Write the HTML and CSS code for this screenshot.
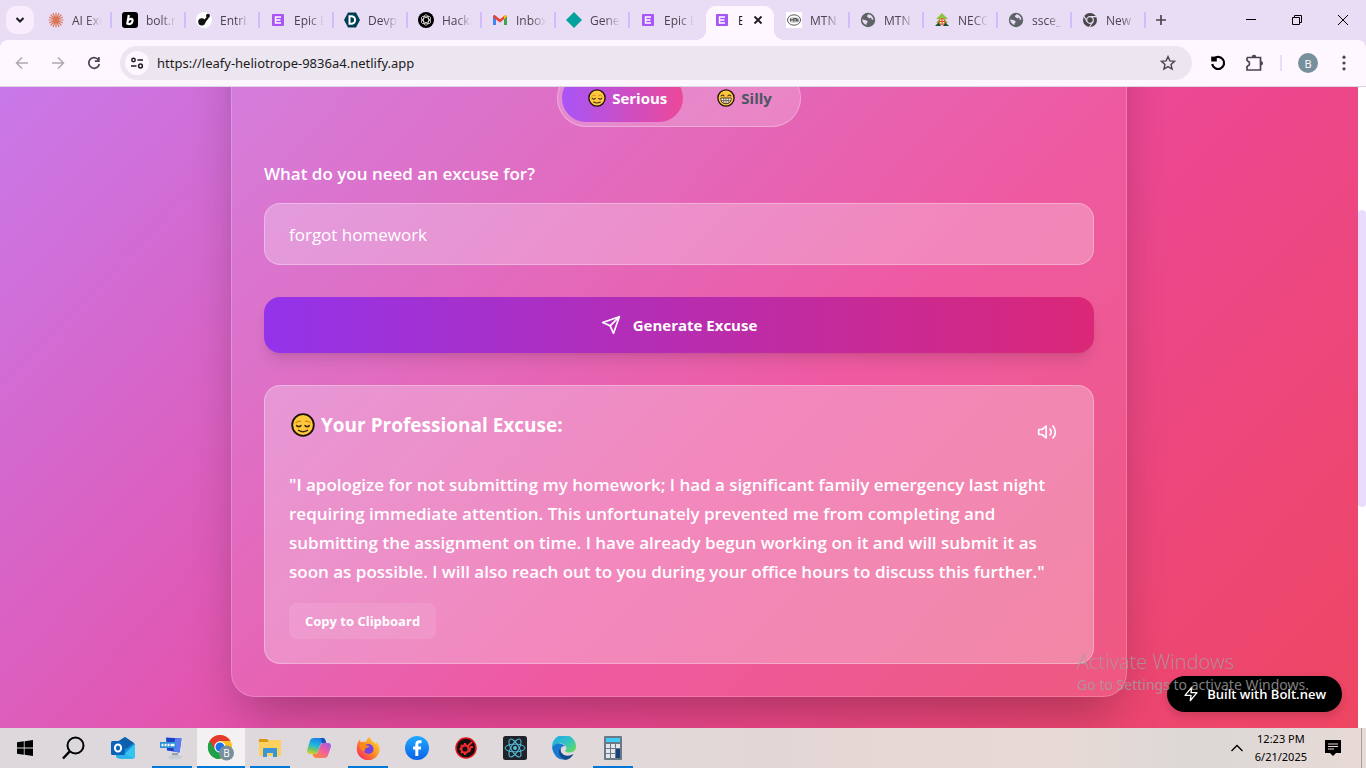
FILE: index.html
```html
<!DOCTYPE html>
<html lang="en">
<head>
    <meta charset="UTF-8">
    <meta name="viewport" content="width=device-width, initial-scale=1.0">
    <title>Epic Excuse Generator</title>
    <link rel="stylesheet" href="styles.css">
</head>
<body>

<!-- shared icons -->
<svg width="0" height="0" class="defs" aria-hidden="true">
    <defs>
        <linearGradient id="edge-a" x1="0" y1="0" x2="1" y2="1">
            <stop offset="0" stop-color="#22a4e8"/><stop offset=".5" stop-color="#2fc2c6"/><stop offset="1" stop-color="#6be04c"/>
        </linearGradient>
        <linearGradient id="fire" x1="1" y1="0" x2="0" y2="1">
            <stop offset="0" stop-color="#ffe53b"/><stop offset=".45" stop-color="#ff9422"/><stop offset="1" stop-color="#f5156c"/>
        </linearGradient>
        <linearGradient id="cop-a" x1=".3" y1="0" x2="0" y2="1">
            <stop offset="0" stop-color="#1a86e8"/><stop offset=".4" stop-color="#22b8d8"/><stop offset=".7" stop-color="#7cc85c"/><stop offset="1" stop-color="#ffd02a"/>
        </linearGradient>
        <linearGradient id="cop-b" x1="1" y1="0" x2=".2" y2="1">
            <stop offset="0" stop-color="#9a5cf0"/><stop offset=".5" stop-color="#ee5f9e"/><stop offset="1" stop-color="#ff8a3a"/>
        </linearGradient>
        <linearGradient id="fb" x1="0" y1="0" x2="0" y2="1">
            <stop offset="0" stop-color="#1faaff"/><stop offset="1" stop-color="#0a62e6"/>
        </linearGradient>
        <symbol id="relieved" viewBox="0 0 24 24">
            <circle cx="12" cy="12" r="10.8" fill="#ffc83d" stroke="#1a1208" stroke-width="1.8"/>
            <g fill="none" stroke-linecap="round">
                <path d="M5 9.6Q7 7.8 9.6 8.4M14.4 8.4Q17 7.8 19 9.6" stroke="#d98b14" stroke-width="1.3"/>
                <path d="M5.6 12.6Q7.8 14.6 10 12.6M14 12.6Q16.2 14.6 18.4 12.6M7.6 17.4Q12 20 16.4 17.4" stroke="#402a10" stroke-width="1.5"/>
            </g>
        </symbol>
        <symbol id="grin" viewBox="0 0 24 24">
            <circle cx="12" cy="12" r="10.8" fill="#ffc83d" stroke="#1a1208" stroke-width="1.8"/>
            <path d="M5.4 9.4Q7.5 6.6 9.6 9.4M14.4 9.4Q16.5 6.6 18.6 9.4" fill="none" stroke="#402a10" stroke-width="1.4" stroke-linecap="round"/>
            <path d="M5 12h14q0 7.6-7 7.6T5 12z" fill="#fff" stroke="#402a10" stroke-width="1.2"/>
            <path d="M5.4 15.6h13.2M9 12v7M12 12v7.4M15 12v7" stroke="#402a10" stroke-width=".9"/>
        </symbol>
        <symbol id="epic" viewBox="0 0 16 16">
            <rect x="2" y="2" width="12" height="12" rx="1" fill="#a855f7"/>
            <path d="M11 5H5.5v6H11M5.5 8h5" fill="none" stroke="#fff" stroke-width="1.4"/>
        </symbol>
        <symbol id="globe" viewBox="0 0 16 16">
            <circle cx="8" cy="8" r="7.2" fill="#5f6368"/>
            <path d="M2.2 7.6c1.5 0 2 .6 3.2.5 1 .1 1.2 1 2 1.1.6.2.6 1-.2 1.2-.7.3-.4 1.6-1 2.6-2.3-.8-4-3-4-5.4zM8.3 2.3c-.1 1-1.2.8-1.4 1.8-.1.9 1 .7 1.3 1.5.4 1 1.400.7 2 .3.8-.4 1.400.3 1.300 1 0 .7.9 1 1.900.9C13.200 4.800 11 2.500 8.300 2.300z" fill="#e9dcf5"/>
        </symbol>
    </defs>
</svg>

<header class="tab-strip">
    <button class="tab-search" aria-label="Search tabs">
        <svg width="10" height="10" viewBox="0 0 10 10"><path d="M1.5 3L5 6.5 8.5 3" fill="none" stroke="#1d1b20" stroke-width="2"/></svg>
    </button>
    <nav class="tabs">
        <a class="tab" href="#">
            <svg class="favicon" viewBox="0 0 16 16"><g stroke="#d97757" stroke-width="1.2" stroke-linecap="round"><path d="M8 1v14M1 8h14M3 3l10 10M13 3L3 13M5.3 1.600l5.400 12.800M10.700 1.600L5.300 14.400M1.600 5.300l12.800 5.400M14.400 5.300L1.600 10.700"/></g></svg>
            <span>AI Excuse</span>
        </a>
        <a class="tab" href="#">
            <svg class="favicon" viewBox="0 0 16 16"><rect width="16" height="16" rx="3" fill="#000"/><path d="M6.8 3L5.3 11.6q2.700 1.400 4.400-.5Q11.200 9 10.400 7.500 9 6 6.400 8" fill="none" stroke="#fff" stroke-width="2.2"/></svg>
            <span>bolt.new</span>
        </a>
        <a class="tab" href="#">
            <svg class="favicon" viewBox="0 0 16 16"><circle cx="8" cy="8" r="8" fill="#fff"/><circle cx="5.8" cy="9.8" r="3.6" fill="#111"/><circle cx="12" cy="3.8" r="2" fill="#111"/><path d="M8.5 7.5l3-3.500 1.500 1.500-4 5.500z" fill="#111"/></svg>
            <span>Entri</span>
        </a>
        <a class="tab" href="#"><svg class="favicon"><use href="#epic"/></svg><span>Epic Excuse</span></a>
        <a class="tab" href="#">
            <svg class="favicon" viewBox="0 0 16 16"><path d="M4 .5h8L16 8l-4 7.500H4L0 8z" fill="#003e54"/><path d="M5.5 4.200v7.600h1.800a3.800 3.800 0 0 0 0-7.600z" fill="none" stroke="#fff" stroke-width="2"/></svg>
            <span>Devpost</span>
        </a>
        <a class="tab" href="#">
            <svg class="favicon" viewBox="0 0 16 16"><circle cx="8" cy="8" r="8" fill="#000"/><g fill="none" stroke="#fff" stroke-width=".7"><ellipse cx="8" cy="8" rx="2.600" ry="5.200"/><ellipse cx="8" cy="8" rx="2.600" ry="5.200" transform="rotate(60 8 8)"/><ellipse cx="8" cy="8" rx="2.600" ry="5.200" transform="rotate(120 8 8)"/></g></svg>
            <span>Hackathon</span>
        </a>
        <a class="tab" href="#">
            <svg class="favicon" viewBox="0 0 16 16"><path d="M1 3.500V13h3V7z" fill="#4285f4"/><path d="M15 3.500V13h-3V7z" fill="#34a853"/><path d="M1 4l3 3.500V4.300L2.500 3z" fill="#c5221f"/><path d="M2 3.200L4 4l4 3.300L12 4l2-.8.500 1.800L8 10.500 1.500 5.500z" fill="#ea4335"/><path d="M12 4.200L13.500 3q1.500 0 1.500 1.500L12 7.500z" fill="#fbbc04"/></svg>
            <span>Inbox (2)</span>
        </a>
        <a class="tab" href="#">
            <svg class="favicon" viewBox="0 0 16 16"><path d="M8 0l8 8-8 8-8-8z" fill="#05a19c"/></svg>
            <span>General</span>
        </a>
        <a class="tab before-active" href="#"><svg class="favicon"><use href="#epic"/></svg><span>Epic Excuse</span></a>
        <div class="tab active">
            <svg class="favicon"><use href="#epic"/></svg><span>Epic</span>
            <button class="tab-close" aria-label="Close tab"><svg width="10" height="10" viewBox="0 0 10 10"><path d="M1.500 1.500l7 7M8.500 1.500l-7 7" stroke="#1d1b20" stroke-width="1.800"/></svg></button>
        </div>
        <a class="tab" href="#">
            <svg class="favicon" viewBox="0 0 16 16"><rect width="16" height="16" fill="#fff"/><ellipse cx="8" cy="8" rx="6.500" ry="5.200" fill="none" stroke="#555"/><ellipse cx="8" cy="8" rx="4.600" ry="3" fill="#ccc"/><path d="M4.500 9.500v-3l1.500 2 1.500-2v3M8 6.500h2M9 6.500v3M10.500 9.500v-3l1.500 3v-3" fill="none" stroke="#444" stroke-width=".8"/></svg>
            <span>MTN N</span>
        </a>
        <a class="tab" href="#"><svg class="favicon"><use href="#globe"/></svg><span>MTN N</span></a>
        <a class="tab" href="#">
            <svg class="favicon" viewBox="0 0 16 16"><path d="M8 1L2 7h3l-3 4h12l-3-4h3z" fill="#8cc63f"/><path d="M1 14l4-4 2 4zM15 14l-4-4-2 4z" fill="#14532d"/><circle cx="8" cy="9.500" r="3" fill="#f4e4b8" stroke="#e9573c"/><path d="M8 6.500v6M5 9.500h6" stroke="#d9482f"/></svg>
            <span>NECO R</span>
        </a>
        <a class="tab" href="#"><svg class="favicon"><use href="#globe"/></svg><span>ssce_int</span></a>
        <a class="tab" href="#">
            <svg class="favicon" viewBox="0 0 16 16"><circle cx="8" cy="8" r="7" fill="#474747"/><circle cx="8" cy="8" r="3.300" fill="#474747" stroke="#e9dcf5" stroke-width="1.200"/><path d="M8 4.600h6.500M5 9.700L2 4.300M10.900 9.700L7.500 15" stroke="#e9dcf5" stroke-width="1.100"/></svg>
            <span>New T</span>
        </a>
    </nav>
    <button class="new-tab" aria-label="New tab"><svg width="12" height="12" viewBox="0 0 12 12"><path d="M6 1v10M1 6h10" stroke="#49454f" stroke-width="1.700"/></svg></button>
    <div class="window-buttons">
        <button aria-label="Minimize"><svg width="10" height="10" viewBox="0 0 10 10"><path d="M0 4.500h10" stroke="#000"/></svg></button>
        <button aria-label="Restore"><svg width="10" height="10" viewBox="0 0 10 10"><path d="M.5 2.500h7v7h-7zM2.500 2.500v-2h7v7h-2" fill="none" stroke="#000"/></svg></button>
        <button aria-label="Close"><svg width="10" height="10" viewBox="0 0 10 10"><path d="M0 0l10 10M10 0L0 10" stroke="#000"/></svg></button>
    </div>
</header>

<div class="toolbar">
    <div class="nav-buttons">
        <button aria-label="Back"><svg width="14" height="14" viewBox="0 0 14 14"><path d="M13 7H2M7 1.500L1.500 7 7 12.500" fill="none" stroke="#aea9b1" stroke-width="1.500"/></svg></button>
        <button aria-label="Forward"><svg width="14" height="14" viewBox="0 0 14 14"><path d="M1 7h11M7 1.500L12.500 7 7 12.500" fill="none" stroke="#aea9b1" stroke-width="1.500"/></svg></button>
        <button aria-label="Reload"><svg width="14" height="14" viewBox="0 0 14 14"><path d="M11.800 4.500A5.300 5.300 0 1 0 12.300 8" fill="none" stroke="#49454f" stroke-width="1.700"/><path d="M12.700 1v5H7.800V4.300H11V1z" fill="#49454f"/></svg></button>
    </div>
    <div class="address-bar">
        <button class="site-info" aria-label="Site information">
            <svg width="14" height="14" viewBox="0 0 14 14"><g fill="none" stroke="#1d1b20" stroke-width="1.500"><circle cx="3.500" cy="4" r="1.700"/><path d="M7.500 4H13M1 10h5.500"/><circle cx="10.500" cy="10" r="1.900"/></g></svg>
        </button>
        <input type="text" aria-label="Address" value="https://leafy-heliotrope-9836a4.netlify.app">
        <button class="star" aria-label="Bookmark"><svg width="16" height="16" viewBox="0 0 16 16"><path d="M8 1.600l1.900 4.300 4.700.4-3.600 3.100 1.100 4.600L8 11.600 3.900 14 5 9.400 1.400 6.300l4.700-.4z" fill="none" stroke="#49454f" stroke-width="1.400"/></svg></button>
    </div>
    <div class="tools">
        <button aria-label="History"><svg width="16" height="16" viewBox="0 0 16 16"><path d="M3.200 4.500A6 6 0 1 1 2.200 9" fill="none" stroke="#000" stroke-width="2.200"/><path d="M1.200 1.500l5.600.5v4.500H1.200z" fill="#000"/></svg></button>
        <button aria-label="Extensions"><svg width="18" height="18" viewBox="0 0 18 18"><path d="M2 3.500h13.500v12.500H2v-4M2 3.500V7" fill="none" stroke="#49454f" stroke-width="1.700"/><path d="M2 7q2.500 0 2.500 2.400T2 12" fill="none" stroke="#49454f" stroke-width="1.600"/><path d="M6.700 3a2.300 2.300 0 0 1 4.600 0zM15.700 7a2.300 2.300 0 0 1 0 4.600z" fill="#49454f"/></svg></button>
        <i class="divider"></i>
        <button class="profile" aria-label="Profile">B</button>
        <button aria-label="Menu"><svg width="4" height="16" viewBox="0 0 4 16" fill="#49454f"><circle cx="2" cy="2.200" r="1.600"/><circle cx="2" cy="8" r="1.600"/><circle cx="2" cy="13.800" r="1.600"/></svg></button>
    </div>
</div>

<div class="viewport">
    <main class="page">
        <div class="card">
            <div class="mode-toggle">
                <button class="mode selected"><svg width="18" height="18"><use href="#relieved"/></svg>Serious</button>
                <button class="mode"><svg width="18" height="18"><use href="#grin"/></svg>Silly</button>
            </div>

            <label for="situation">What do you need an excuse for?</label>
            <input type="text" id="situation" value="forgot homework">

            <button class="generate">
                <svg width="20" height="20" viewBox="0 0 24 24" fill="none" stroke="#fff" stroke-width="2" stroke-linecap="round" stroke-linejoin="round"><path d="M22 2L15 22 11 13 2 9z"/><path d="M22 2L11 13"/></svg>
                Generate Excuse
            </button>

            <section class="result">
                <div class="result-head">
                    <h3><svg width="24" height="24"><use href="#relieved"/></svg>Your Professional Excuse:</h3>
                    <button class="speak" aria-label="Read aloud">
                        <svg width="20" height="20" viewBox="0 0 24 24" fill="none" stroke="#fff" stroke-width="2" stroke-linecap="round" stroke-linejoin="round"><path d="M11 5L6 9H2v6h4l5 4z"/><path d="M15.540 8.460a5 5 0 0 1 0 7.070"/><path d="M19.070 4.930a10 10 0 0 1 0 14.140"/></svg>
                    </button>
                </div>
                <p>"I apologize for not submitting my homework; I had a significant family emergency last night requiring immediate attention. This unfortunately prevented me from completing and submitting the assignment on time. I have already begun working on it and will submit it as soon as possible. I will also reach out to you during your office hours to discuss this further."</p>
                <button class="copy">Copy to Clipboard</button>
            </section>
        </div>
    </main>
    <div class="scrollbar"><div class="thumb"></div></div>

    <a class="bolt-badge" href="#">
        <svg width="16" height="16" viewBox="0 0 24 24" fill="none" stroke="#fff" stroke-width="2" stroke-linejoin="round"><path d="M13 2L3 14h9l-1 8 10-12h-9z"/></svg>
        Built with Bolt.new
    </a>
    <div class="watermark">
        <p class="big">Activate Windows</p>
        <p>Go to Settings to activate Windows.</p>
    </div>
</div>

<footer class="taskbar">
    <div class="apps">
        <button aria-label="Start"><svg width="16" height="16" viewBox="0 0 16 16"><path d="M0 2.300L6.800 1.300V7.600H0zM7.600 1.200L16 0v7.600H7.600zM0 8.400h6.800v6.300L0 13.700zM7.600 8.400H16V16l-8.400-1.200z"/></svg></button>
        <button aria-label="Search"><svg width="24" height="24" viewBox="0 0 24 24"><circle cx="13.500" cy="9.500" r="8" fill="none" stroke="#000" stroke-width="2"/><path d="M8 15.200L1 22.500" stroke="#000" stroke-width="2.400"/></svg></button>
        <button aria-label="Outlook"><svg width="24" height="24" viewBox="0 0 24 24"><path d="M4 8L14 1l10 7v12q0 2-2 2H7z" fill="#1490df"/><path d="M6 6l8-5 9 6-8 6z" fill="#0f5fa8"/><path d="M24 8v12q0 3-3 3H8z" fill="#35c3ef"/><path d="M5 17l5-2 12 7.500H8q-3 0-3-3z" fill="#2bb2ea"/><rect y="5" width="14" height="14" rx="1.500" fill="#0a64b8"/><ellipse cx="7" cy="12" rx="3.100" ry="3.600" fill="none" stroke="#fff" stroke-width="2"/></svg></button>
        <button class="open" aria-label="Remote desktop"><svg width="24" height="24" viewBox="0 0 24 24"><path d="M5 .500l18 1-2 17-15-2.500z" fill="#d8dde6"/><path d="M6 1.500l15.500 1-2 14L7 14.500z" fill="#1f3fc4"/><path d="M15 2.200l6.500.3-2 14-6-1z" fill="#5c7df0"/><rect y="6" width="16" height="6" fill="#2d8fd4"/><path d="M1.500 9h2M4.500 9h2M7.500 9h2M10.500 9h4" stroke="#fff" stroke-width="2.500"/><path d="M12 17h6v3H12z" fill="#9aa0ab"/><path d="M6 21l8-2 9 1-3 3-9 .5z" fill="#c9ced6"/></svg></button>
        <button class="open current" aria-label="Chrome"><svg width="28" height="26" viewBox="0 0 28 26"><circle cx="13" cy="12" r="12" fill="#fbc116"/><path d="M2.600 6A12 12 0 0 1 23.400 6H13z" fill="#e33b2e"/><path d="M2.600 6A12 12 0 0 0 13 24l5.200-9z" fill="#1fa14a"/><path d="M2.600 6L13 4l-5 11z" fill="#e33b2e"/><path d="M4 8.500l4 6.500 5 3-2 6A12 12 0 0 1 2.600 6z" fill="#1fa14a"/><circle cx="13" cy="12" r="5.700" fill="#fff"/><circle cx="13" cy="12" r="4.500" fill="#1a73e8"/><circle cx="19.500" cy="18" r="7.500" fill="#78909c"/><text x="19.500" y="21.500" text-anchor="middle" class="badge-letter">B</text></svg></button>
        <button class="open" aria-label="File Explorer"><svg width="22" height="20" viewBox="0 0 22 20"><path d="M0 1h8l2 2v4H0z" fill="#d99a12"/><path d="M0 4h9l2-2h11v16H0z" fill="#fdd160"/><path d="M4 19v-8q0-1 1-1h12q1 0 1 1v8h-4v-4H8v4z" fill="#3a95d8"/></svg></button>
        <button aria-label="Copilot"><svg width="24" height="22" viewBox="0 0 24 22"><path d="M7 1h8.500q2.300 0 3 2.400l.7 2.600h-3.200q-2.400 0-3.200 2.600L11 14.500q-.8 2.500-3 2.500H3q-4 0-2.700-4.500l2.500-8.300Q3.800 1 7 1z" fill="url(#cop-a)"/><path d="M17 21H9q-2.500 0-3-2.400L5.500 17H8q2.400 0 3.200-2.600L13 8.500q.8-2.500 3-2.500h5q4 0 2.700 4.500l-2.500 7.300Q20.200 21 17 21z" fill="url(#cop-b)"/><path d="M13.500 1h2q2.300 0 3 2.400l.7 2.600H15z" fill="#1b50b8"/></svg></button>
        <button class="open" aria-label="Firefox"><svg width="24" height="24" viewBox="0 0 24 24"><path d="M13 1q2 1.500 3 4 3 1 4.500 4L20 5.500Q23.500 9 23.500 13A11.300 11.300 0 0 1 .800 13Q.600 7 4 3.500q0 2 1 3Q7.500 5 10 6q1-3.500 3-5z" fill="url(#fire)"/><circle cx="12.500" cy="13" r="5" fill="#7542e5"/><path d="M3.500 9q4-2 7 .5l3 .5q-1 2-3.500 2-2 1-1 3.500-5-1-5.500-6.500z" fill="#ff8a16"/></svg></button>
        <button aria-label="Facebook"><svg width="24" height="24" viewBox="0 0 24 24"><circle cx="12" cy="12" r="12" fill="url(#fb)"/><path d="M16.500 5.800h-2q-2.700 0-2.700 2.800V20M8 12h8" fill="none" stroke="#fff" stroke-width="3"/></svg></button>
        <button aria-label="Game booster"><svg width="22" height="22" viewBox="0 0 22 22"><circle cx="11" cy="11" r="10" fill="#111" stroke="#e0141c" stroke-width="1.500"/><circle cx="10" cy="12" r="3.700" fill="none" stroke="#f02a2e" stroke-width="2.300"/><path d="M10 6v2M4.500 12h2M6 8l1.500 1.500M6 16l1.500-1.500M10 16v2M12 10l5-5M14 15l2-5h2" stroke="#f02a2e" stroke-width="2"/></svg></button>
        <button aria-label="React"><svg width="24" height="24" viewBox="0 0 24 24"><rect width="24" height="24" rx="2.500" fill="#20232a"/><g fill="none" stroke="#53c1de"><ellipse cx="12" cy="12" rx="10" ry="3.900"/><ellipse cx="12" cy="12" rx="10" ry="3.900" transform="rotate(60 12 12)"/><ellipse cx="12" cy="12" rx="10" ry="3.900" transform="rotate(120 12 12)"/></g><circle cx="12" cy="12" r="1.900" fill="#53c1de"/></svg></button>
        <button aria-label="Edge"><svg width="24" height="24" viewBox="0 0 24 24"><path d="M0 11.500A12 12 0 0 1 24 10q.3 6.500-6.500 6.500-4.500 0-4.200-2 1.700-1.500.7-4Q12 7 7.500 7.500 2 8 0 11.500z" fill="url(#edge-a)"/><path d="M0 12q1.500-4.500 7-4.500 4 0 6.300 2.500-4.800 0-5.300 4.500Q8 20 14 23.700 3 25 0 12z" fill="#1878d2"/><path d="M9 11.500q-1.500 5 3 7.500 4.500 2 9.500-1Q19 23 13.500 24 6 21 7 14.500z" fill="#114a8b"/></svg></button>
        <button class="open" aria-label="Calculator"><svg width="18" height="24" viewBox="0 0 18 24"><rect width="18" height="24" rx="1" fill="#6b7886"/><rect x="2" y="2" width="14" height="4" fill="#3fcbf4"/><g fill="#e3e6ea"><path d="M2 8h4v4H2zM7 8h4v4H7zM12 8h4v4h-4zM2 13h4v4H2zM7 13h4v4H7zM2 18h4v4H2zM7 18h4v4H7z"/></g><path d="M12 13h4v9h-4z" fill="#15427c"/></svg></button>
    </div>
    <div class="tray">
        <button aria-label="Hidden icons"><svg width="12" height="8" viewBox="0 0 12 8"><path d="M.5 7L6 1.500 11.500 7" fill="none" stroke="#000" stroke-width="1.300"/></svg></button>
        <div class="clock"><span>12:23 PM</span><span>6/21/2025</span></div>
        <button aria-label="Notifications"><svg width="16" height="16" viewBox="0 0 16 16"><path d="M0 0h16v13h-5l-3 3-3-3H0z"/><path d="M3 4h10M3 6.500h10M3 9h6" stroke="#e8d9d6"/></svg></button>
        <i class="show-desktop"></i>
    </div>
</footer>

</body>
</html>
```

FILE: styles.css
```css
* {
    box-sizing: border-box;
}

body {
    margin: 0;
    height: 100vh;
    display: flex;
    flex-direction: column;
    overflow: hidden;
    font-family: "Open Sans", "Noto Sans", sans-serif;
    background: #e9dcf5;
}

button {
    border: none;
    background: none;
    padding: 0;
    font-family: inherit;
    color: inherit;
    display: flex;
    align-items: center;
    justify-content: center;
    cursor: pointer;
}

input {
    font-family: inherit;
}

a {
    color: inherit;
    text-decoration: none;
}

.defs {
    position: absolute;
}

/* Tab strip */
.tab-strip {
    height: 40px;
    display: flex;
    align-items: center;
    padding-left: 6px;
    flex-shrink: 0;
}

.tab-search {
    width: 28px;
    height: 28px;
    border-radius: 10px;
    background: #f8ecfd;
    margin-right: 4px;
}

.tabs {
    display: flex;
    height: 100%;
}

.tab {
    width: 74px;
    height: 40px;
    display: flex;
    align-items: center;
    gap: 8px;
    padding: 0 10px;
    font-size: 12px;
    color: #49454f;
    position: relative;
}

.tab span {
    flex: 1;
    min-width: 0;
    overflow: hidden;
    white-space: nowrap;
    mask-image: linear-gradient(to right, #000 50%, transparent);
}

.tab::after {
    content: "";
    position: absolute;
    right: 0;
    top: 12px;
    width: 2px;
    height: 16px;
    background: #d3bcfd;
}

.tab.before-active::after {
    display: none;
}

.favicon {
    width: 16px;
    height: 16px;
    flex-shrink: 0;
}

.tab.active {
    width: 68px;
    height: 34px;
    margin: 6px 2px 0;
    padding: 0 11px 6px 8px;
    border-radius: 10px 10px 0 0;
    background: #fef7ff;
    color: #1d1b20;
}

.tab.active span {
    mask-image: linear-gradient(to right, #000 50%, transparent 70%);
}

/* curved feet of the selected tab */
.tab.active::before,
.tab.active::after {
    content: "";
    position: absolute;
    top: auto;
    bottom: 0;
    width: 10px;
    height: 10px;
}

.tab.active::before {
    left: -10px;
    background: radial-gradient(circle at 0 0, transparent 10px, #fef7ff 10px);
}

.tab.active::after {
    right: -10px;
    background: radial-gradient(circle at 100% 0, transparent 10px, #fef7ff 10px);
}

.new-tab {
    width: 30px;
    height: 28px;
}

.window-buttons {
    margin-left: auto;
    display: flex;
}

.window-buttons button {
    width: 46px;
    height: 40px;
}

/* Toolbar */
.toolbar {
    height: 47px;
    display: flex;
    align-items: center;
    flex-shrink: 0;
    background: #fef7ff;
    border-bottom: 1px solid #ddd6e2;
    border-radius: 8px 8px 0 0;
}

.nav-buttons {
    display: flex;
    gap: 8px;
    padding: 0 12px 0 8px;
}

.nav-buttons button {
    width: 28px;
    height: 28px;
}

.address-bar {
    flex: 1;
    height: 34px;
    display: flex;
    align-items: center;
    padding: 0 16px 0 5px;
    border-radius: 17px;
    background: #ece6f0;
}

.site-info {
    width: 24px;
    height: 24px;
    border-radius: 50%;
    background: #fef7ff;
}

.address-bar input {
    flex: 1;
    border: none;
    outline: none;
    background: none;
    padding: 0 8px;
    font-family: "Noto Sans", sans-serif;
    font-size: 13px;
    color: #1d1b20;
}

.tools {
    display: flex;
    align-items: center;
    gap: 16px;
    padding: 0 12px 0 16px;
}

.tools button {
    width: 20px;
    height: 20px;
}

.tools .divider {
    width: 2px;
    height: 16px;
    background: #e8ddfb;
}

.profile {
    border-radius: 50%;
    background: #78909c;
    color: #fff;
    font-size: 11px;
}

/* Page */
.viewport {
    flex: 1;
    min-height: 0;
    display: flex;
    position: relative;
    overflow: hidden;
}

.page {
    flex: 1;
    padding: 0 16px;
    background: linear-gradient(to bottom right, #c084fc, #ec4899, #ef4444) 0 -266px / 100% 1388px;
    color: #fff;
}

.card {
    max-width: 896px;
    margin: -150px auto 0;
    padding: 131px 32px 32px;
    border: 1px solid rgba(255, 255, 255, 0.2);
    border-radius: 24px;
    background: rgba(255, 255, 255, 0.1);
    box-shadow: 0 25px 50px -12px rgba(0, 0, 0, 0.3);
    display: flex;
    flex-direction: column;
}

.mode-toggle {
    align-self: center;
    display: flex;
    position: relative;
    z-index: 0;
    padding: 4px;
    border: 1px solid rgba(255, 255, 255, 0.3);
    border-radius: 29px;
    background: rgba(255, 255, 255, 0.2);
    margin-bottom: 32px;
}

.mode {
    height: 48px;
    padding: 0 24px;
    gap: 6px;
    font-size: 15px;
    font-weight: 700;
    color: #4b5563;
}

.mode svg {
    margin-left: 2px;
}

.mode.selected {
    color: #fff;
}

.mode.selected::before {
    content: "";
    position: absolute;
    z-index: -1;
    top: 4px;
    bottom: 4px;
    left: 4px;
    width: 50%;
    border-radius: 24px;
    background: linear-gradient(to right, #a855f7, #ec4899);
}

.card label {
    font-size: 17px;
    line-height: 30px;
    font-weight: 600;
    margin-bottom: 14px;
}

.card input {
    height: 62px;
    padding: 0 24px;
    border: 1px solid rgba(255, 255, 255, 0.3);
    border-radius: 16px;
    background: rgba(255, 255, 255, 0.27);
    color: #fff;
    font-size: 17px;
    margin-bottom: 32px;
}

.generate {
    height: 56px;
    gap: 12px;
    border-radius: 16px;
    background: linear-gradient(to right, #9333ea, #db2777);
    box-shadow: 0 10px 15px -3px rgba(0, 0, 0, 0.1), 0 4px 6px -4px rgba(0, 0, 0, 0.1);
    font-size: 15px;
    font-weight: 700;
    margin-bottom: 32px;
}

.result {
    padding: 24px;
    border: 1px solid rgba(255, 255, 255, 0.3);
    border-radius: 16px;
    background: rgba(255, 255, 255, 0.28);
}

.result-head {
    display: flex;
    justify-content: space-between;
    align-items: flex-start;
    margin-bottom: 16px;
}

.result h3 {
    margin: 0;
    padding-left: 2px;
    display: flex;
    align-items: center;
    gap: 6px;
    font-size: 19px;
    line-height: 30px;
    font-weight: 700;
}

.speak {
    width: 44px;
    height: 44px;
}

.result p {
    margin: 0 0 17px;
    font-size: 17px;
    line-height: 29px;
    font-weight: 600;
}

.copy {
    height: 36px;
    padding: 0 16px;
    border-radius: 8px;
    background: rgba(255, 255, 255, 0.1);
    font-size: 13px;
    font-weight: 700;
}

.scrollbar {
    width: 8px;
    background: #fff;
    padding-top: 123px;
}

.thumb {
    height: 297px;
    border-radius: 4px;
    background: #eadcfd;
}

.bolt-badge {
    position: absolute;
    right: 24px;
    bottom: 16px;
    height: 36px;
    display: flex;
    align-items: center;
    gap: 8px;
    padding: 0 16px;
    border-radius: 18px;
    background: #000;
    color: #fff;
    font-size: 13px;
    font-weight: 600;
    box-shadow: 0 4px 8px rgba(0, 0, 0, 0.15);
}

.watermark {
    position: absolute;
    right: 57px;
    bottom: 33px;
    color: rgba(160, 160, 160, 0.8);
    font-family: "Noto Sans", sans-serif;
    font-size: 14px;
    line-height: 20px;
    pointer-events: none;
}

.watermark p {
    margin: 0;
}

.watermark .big {
    font-family: "Open Sans", sans-serif;
    font-size: 20px;
    line-height: 26px;
    font-weight: 300;
}

/* Taskbar */
.taskbar {
    height: 40px;
    flex-shrink: 0;
    display: flex;
    justify-content: space-between;
    background: linear-gradient(to right, #ddd8dc, #dfd9dc 35%, #e4d7d5 60%, #e8dad6 78%, #dbd8d6 88%, #e8dad6);
}

.apps {
    display: flex;
    gap: 1px;
    padding-left: 1px;
}

.apps button {
    width: 48px;
    height: 40px;
    position: relative;
}

.apps .open::after {
    content: "";
    position: absolute;
    bottom: 0;
    left: 4px;
    right: 4px;
    height: 2px;
    background: #0078d7;
}

.apps .current {
    background: #f3f1f2;
}

.apps .current::after {
    left: 0;
    right: 0;
}

.badge-letter {
    font-size: 10px;
    fill: #fff;
}

.tray {
    display: flex;
    align-items: center;
    gap: 12px;
}

.clock {
    display: flex;
    flex-direction: column;
    align-items: center;
    font-family: "Noto Sans", sans-serif;
    font-size: 11px;
    line-height: 18px;
    margin-right: 6px;
}

.show-desktop {
    width: 5px;
    height: 40px;
    margin-left: 8px;
    border-left: 1px solid #a8a0a0;
}
```
